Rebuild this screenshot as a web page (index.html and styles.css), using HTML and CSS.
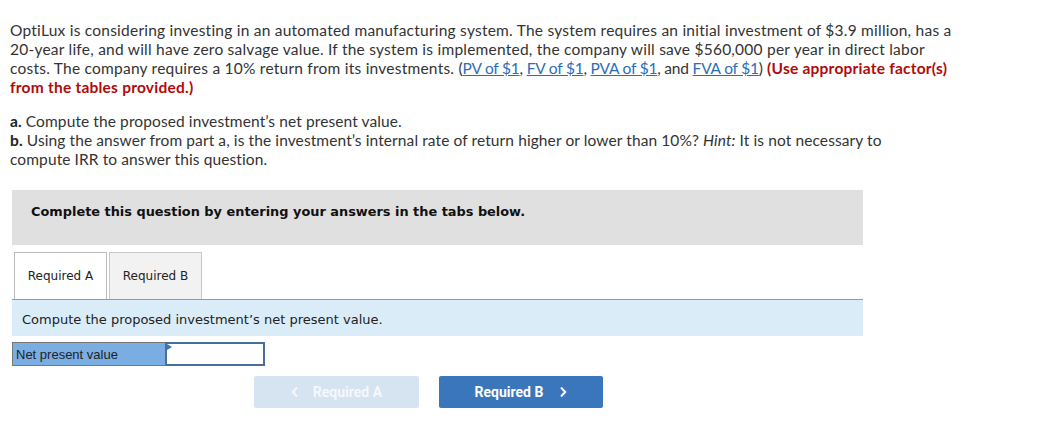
FILE: index.html
```html
<!DOCTYPE html>
<html>
<head>
<meta charset="utf-8">
<link rel="stylesheet" href="styles.css">
</head>
<body>
<div class="page">
  <p class="question">OptiLux is considering investing in an automated manufacturing system. The system requires an initial investment of $3.9 million, has a 20-year life, and will have zero salvage value. If the system is implemented, the company will save $560,000 per year in direct labor costs. The company requires a 10% return from its investments. <span class="refs">(<a href="#">PV of $1</a>, <a href="#">FV of $1</a>, <a href="#">PVA of $1</a>, and <a href="#">FVA of $1</a>)</span> <strong class="warn">(Use appropriate factor(s) from the tables provided.)</strong></p>
  <p class="parts"><strong>a.</strong> Compute the proposed investment’s net present value.<br><strong>b.</strong> Using the answer from part a, is the investment’s internal rate of return higher or lower than 10%? <em>Hint:</em> It is not necessary to compute IRR to answer this question.</p>

  <div class="instructions">Complete this question by entering your answers in the tabs below.</div>

  <div class="tabs">
    <div class="tab active">Required A</div>
    <div class="tab">Required B</div>
  </div>
  <div class="panel">Compute the proposed investment’s net present value.</div>

  <div class="answer-row">
    <div class="answer-label">Net present value</div>
    <div class="answer-input"><span class="marker"></span></div>
  </div>

  <div class="nav">
    <button class="nav-btn disabled"><svg class="chev" viewBox="0 0 8 12" width="8" height="12"><path d="M6 1.5 L1.8 6 L6 10.5" fill="none" stroke="currentColor" stroke-width="2"/></svg><span>Required A</span></button>
    <button class="nav-btn primary"><span>Required B</span><svg class="chev" viewBox="0 0 8 12" width="8" height="12"><path d="M2 1.5 L6.2 6 L2 10.5" fill="none" stroke="currentColor" stroke-width="2"/></svg></button>
  </div>
</div>
</body>
</html>
```

FILE: styles.css
```css
* { box-sizing: border-box; }
html, body { margin: 0; padding: 0; background: #fff; }
.page {
  padding: 21px 0 0 0;
  font-family: "Lato", "Liberation Sans", sans-serif;
  color: #333;
}
.question, .parts {
  margin: 0 0 0 10px;
  width: 955px;
  font-size: 15.5px;
  letter-spacing: 0.23px;
  line-height: 19px;
}
.refs { letter-spacing: -0.2px; }
.question a { color: #2d6db5; text-decoration: underline; }
.warn { color: #b00a0a; font-weight: 700; letter-spacing: 0.23px; }
.parts { margin-top: 15px; width: 890px; letter-spacing: 0.1px; }
.parts strong { font-weight: 700; color: #222; }
.instructions {
  margin: 21px 0 0 12px;
  width: 851px;
  height: 55px;
  background: #e0e0e0;
  padding: 14px 0 0 19px;
  font-family: "DejaVu Sans", Verdana, sans-serif;
  font-weight: 700;
  font-size: 12.9px;
  line-height: 16px;
  color: #111;
}
.tabs {
  margin: 7px 0 0 12px;
  width: 851px;
  display: flex;
  gap: 2px;
  padding-left: 2px;
  border-bottom: 1px solid #999;
  height: 48px;
  align-items: flex-end;
}
.tab {
  width: 93px;
  height: 47px;
  border: 1px solid #c8c8c8;
  border-bottom: none;
  background: #f2f2f2;
  display: flex;
  align-items: center;
  justify-content: center;
  font-family: "DejaVu Sans", Verdana, sans-serif;
  font-size: 12px;
  color: #222;
}
.tab.active { background: #fff; border-color: #bbb; }
.panel {
  margin-left: 12px;
  width: 851px;
  height: 36px;
  background: #dbecf9;
  display: flex;
  align-items: center;
  padding: 2px 0 0 10px;
  font-family: "DejaVu Sans", Verdana, sans-serif;
  font-size: 13px;
  color: #222;
}
.answer-row {
  margin: 6px 0 0 12px;
  display: flex;
  height: 24px;
}
.answer-label {
  width: 153px;
  height: 24px;
  background: #7aaee3;
  border: 1px solid #777;
  border-right: none;
  font-family: "Liberation Sans", Arial, sans-serif;
  font-size: 13px;
  color: #222;
  display: flex;
  align-items: center;
  padding: 1px 0 0 3px;
}
.answer-input {
  position: relative;
  width: 100px;
  height: 24px;
  background: #fff;
  border: 2px solid #4a6e9c;
}
.marker {
  position: absolute;
  left: 0;
  top: 0;
  width: 0;
  height: 0;
  border-top: 3px solid transparent;
  border-bottom: 3px solid transparent;
  border-left: 5px solid #3b77bb;
}
.nav {
  margin: 10px 0 0 254px;
  display: flex;
  gap: 20px;
}
.nav-btn {
  width: 165px;
  height: 32px;
  border: none;
  border-radius: 2px;
  display: flex;
  align-items: center;
  justify-content: center;
  gap: 14px;
  font-family: "Roboto", "Liberation Sans", sans-serif;
  font-weight: 700;
  font-size: 14px;
  color: #fff;
  padding: 0;
}
.nav-btn.disabled { background: #d6e3f1; color: #f4f8fc; }
.nav-btn.primary { background: #3a76bb; width: 164px; gap: 16px; }
.chev { display: block; }
```
